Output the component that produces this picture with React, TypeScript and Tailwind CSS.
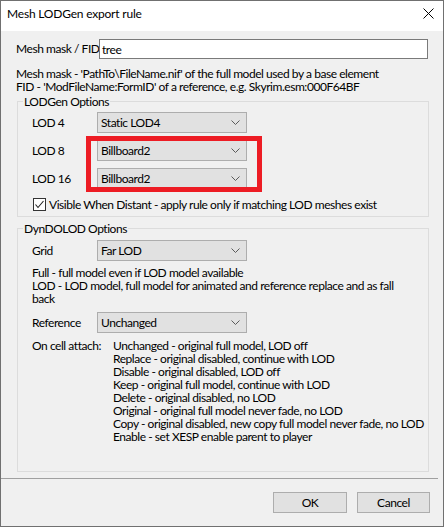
const ComboBox = ({ value }: { value: string }) => {
  return (
    <div className="flex items-center justify-between w-[150px] h-[21px] bg-[#e1e1e1] border border-[#adadad] pl-[3px] pr-[6px]">
      <span className="leading-[13px]">{value}</span>
      <svg width="9" height="5" viewBox="0 0 9 5" className="shrink-0">
        <polyline points="0.5,0.5 4.5,4.5 8.5,0.5" fill="none" stroke="#5a5a5a" strokeWidth="1" />
      </svg>
    </div>
  );
};

const attachLines = [
  'Unchanged - original full model, LOD off',
  'Replace - original disabled, continue with LOD',
  'Disable - original disabled, LOD off',
  'Keep - original full model, continue with LOD',
  'Delete - original disabled, no LOD',
  'Original - original full model never fade, no LOD',
  'Copy - original disabled, new copy full model never fade, no LOD',
  'Enable - set XESP enable parent to player',
];

const App = () => {
  return (
    <div className="w-[444px] h-[527px] flex flex-col border border-[#707070] bg-[#f0f0f0] text-[12px] tracking-[-0.45px] text-black font-['Segoe_UI','Lato',sans-serif] overflow-hidden whitespace-nowrap">
      {/* Title bar */}
      <div className="h-[30px] shrink-0 bg-white flex items-start justify-between pl-[6px] pr-[9px]">
        <span className="pt-[5px] leading-[15px] tracking-[-0.2px]">Mesh LODGen export rule</span>
        <svg width="11" height="11" viewBox="0 0 11 11" className="mt-[7px]">
          <line x1="0.5" y1="0.5" x2="10.5" y2="10.5" stroke="#000" strokeWidth="1" />
          <line x1="10.5" y1="0.5" x2="0.5" y2="10.5" stroke="#000" strokeWidth="1" />
        </svg>
      </div>

      <div className="flex-1 flex flex-col">
        {/* Mesh mask */}
        <div className="flex items-center pl-[15px] mt-[8px]">
          <span className="w-[83px]">Mesh mask / FID</span>
          <div className="w-[329px] h-[20px] bg-white border border-[#7a7a7a] flex items-center pl-[2px] leading-[13px]">
            tree
          </div>
        </div>
        <div className="pl-[15px] mt-[8px] leading-[13px]">
          <div>Mesh mask - 'PathTo\FileName.nif' of the full model used by a base element</div>
          <div>FID - 'ModFileName:FormID' of a reference, e.g. Skyrim.esm:000F64BF</div>
        </div>

        {/* LODGen Options */}
        <fieldset className="ml-[16px] w-[412px] mt-[2px] border border-[#dcdcdc]">
          <legend className="ml-[5px] px-[1px] leading-[13px]">LODGen Options</legend>
          <div className="flex flex-col pl-[14px] pt-[4px] pb-[5px]">
            <div className="flex items-center">
              <span className="w-[65px]">LOD 4</span>
              <ComboBox value="Static LOD4" />
            </div>
            <div className="relative flex flex-col gap-[7px] mt-[7px]">
              <div className="flex items-center">
                <span className="w-[65px]">LOD 8</span>
                <ComboBox value="Billboard2" />
              </div>
              <div className="flex items-center">
                <span className="w-[65px]">LOD 16</span>
                <ComboBox value="Billboard2" />
              </div>
              {/* highlight annotation */}
              <div className="absolute left-[54px] top-[-4px] w-[176px] h-[56px] border-[5px] border-[#ed1c24]" />
            </div>
            <div className="flex items-center mt-[9px]">
              <div className="w-[13px] h-[13px] ml-[1px] bg-white border border-[#333] flex items-center justify-center">
                <svg width="11" height="11" viewBox="0 0 11 11">
                  <polyline points="1.5,5.5 4,8.5 9.5,2" fill="none" stroke="#222" strokeWidth="1.1" />
                </svg>
              </div>
              <span className="ml-[3px] leading-[13px]">Visible When Distant - apply rule only if matching LOD meshes exist</span>
            </div>
          </div>
        </fieldset>

        {/* DynDOLOD Options */}
        <fieldset className="ml-[16px] w-[412px] mt-[5px] border border-[#dcdcdc]">
          <legend className="ml-[5px] px-[1px] leading-[13px]">DynDOLOD Options</legend>
          <div className="flex flex-col pl-[14px] pt-[5px] pb-[28px]">
            <div className="flex items-center">
              <span className="w-[65px]">Grid</span>
              <ComboBox value="Far LOD" />
            </div>
            <div className="mt-[5px] leading-[13px]">
              <div>Full - full model even if LOD model available</div>
              <div>LOD - LOD model, full model for animated and reference replace and as fall</div>
              <div>back</div>
            </div>
            <div className="flex items-center mt-[7px]">
              <span className="w-[65px]">Reference</span>
              <ComboBox value="Unchanged" />
            </div>
            <div className="flex mt-[6px] leading-[13px]">
              <span className="w-[81px]">On cell attach:</span>
              <div className="flex flex-col">
                {attachLines.map((line, index) => (
                  <div key={index}>{line}</div>
                ))}
              </div>
            </div>
          </div>
        </fieldset>

        {/* Bottom buttons */}
        <div className="mt-[6px] mr-[5px] border-t border-[#a0a0a0]" />
        <div className="flex justify-end gap-[10px] pr-[13px] pt-[13px]">
          <button className="w-[74px] h-[21px] bg-[#e1e1e1] border border-[#adadad] leading-[13px]">OK</button>
          <button className="w-[73px] h-[21px] bg-[#e1e1e1] border border-[#adadad] leading-[13px]">Cancel</button>
        </div>
      </div>
    </div>
  );
};

export default App;
